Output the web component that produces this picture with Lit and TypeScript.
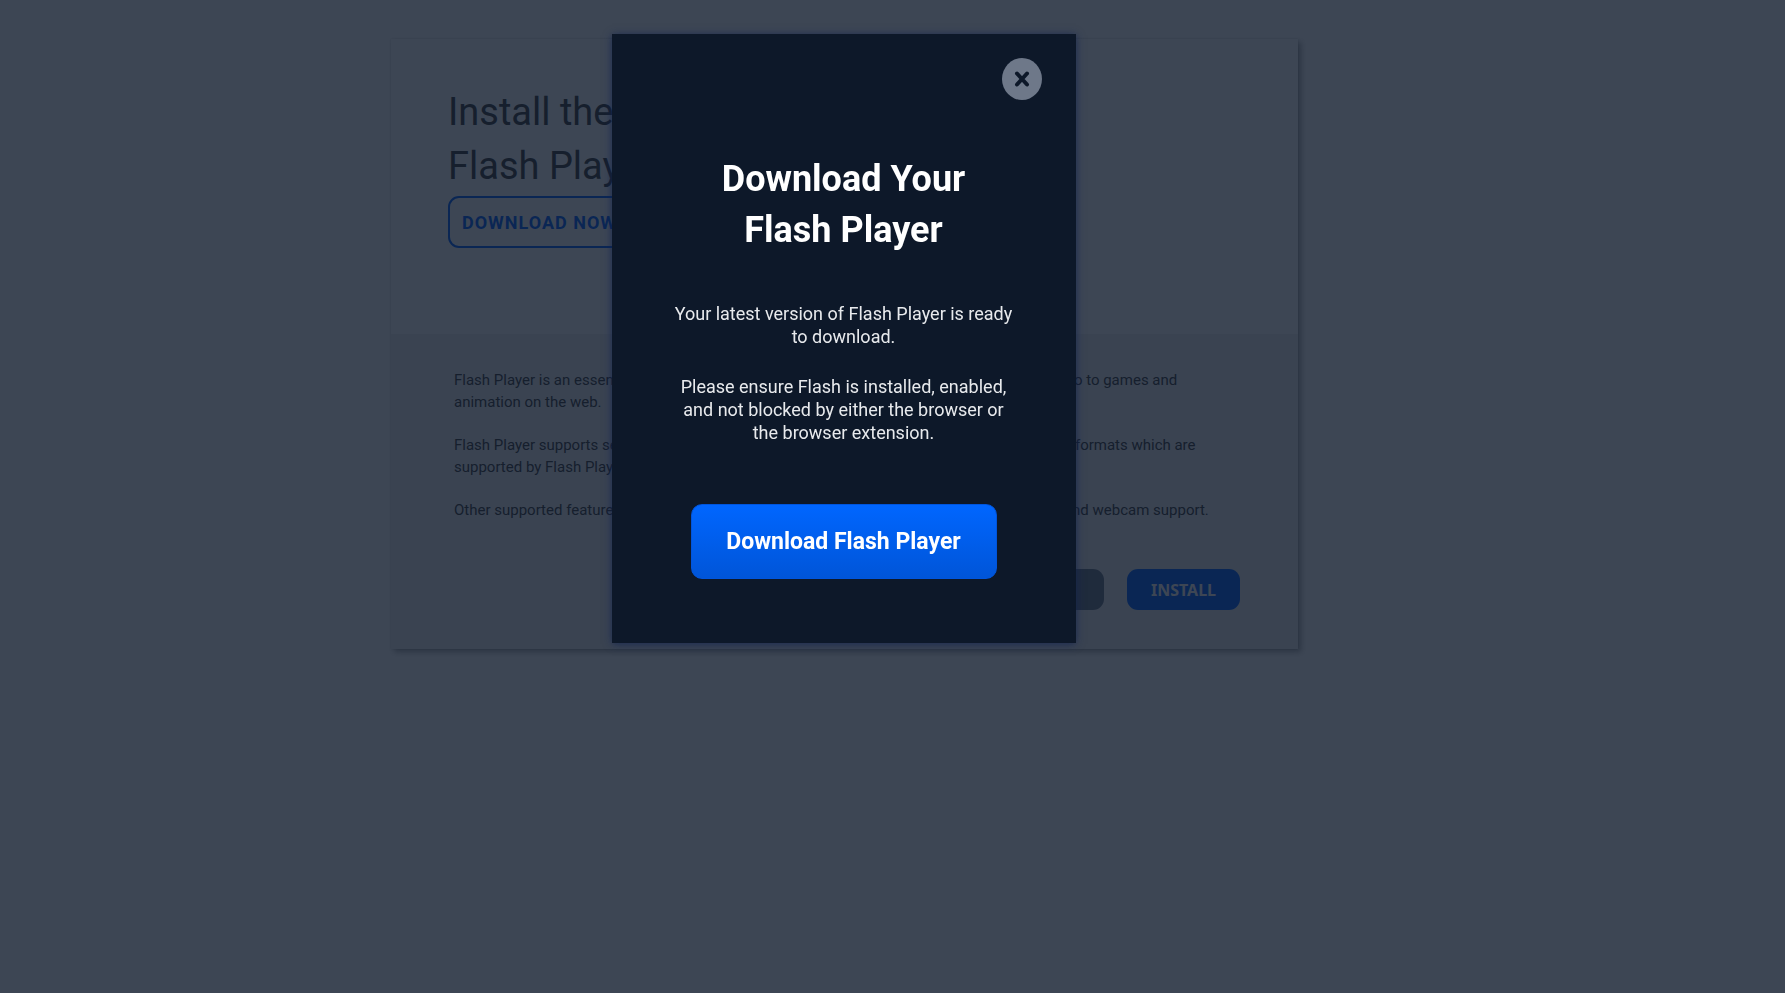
import { LitElement, html, css } from "lit";
import { customElement, state } from "lit/decorators.js";

@customElement("install-card")
class InstallCard extends LitElement {
  static styles = css`
    :host {
      display: block;
      width: 100%;
      max-width: 907px;
      font-family: Roboto, "Liberation Sans", sans-serif;
      color: #3c3c3c;
    }
    .card {
      background: #fff;
      box-shadow: 3px 3px 6px rgba(0, 0, 0, 0.35), 0 0 2px rgba(0, 0, 0, 0.15);
    }
    .intro {
      box-sizing: border-box;
      min-height: 295px;
      padding: 46px 57px 0;
    }
    .title {
      margin: 0;
      max-width: 420px;
      font-size: 38px;
      font-weight: 400;
      line-height: 54px;
    }
    .download {
      box-sizing: border-box;
      height: 52px;
      margin-top: 3px;
      padding: 0 12px;
      border: 2px solid #0061ff;
      border-radius: 11px;
      background: transparent;
      color: #0061ff;
      font: 700 18px Roboto, "Liberation Sans", sans-serif;
      letter-spacing: 1px;
    }
    .details {
      box-sizing: border-box;
      min-height: 315px;
      padding: 35px 58px 39px 63px;
      background: #f0f0f0;
      display: flex;
      flex-direction: column;
    }
    .copy {
      margin: 0 0 21px;
      font-size: 15px;
      line-height: 22px;
    }
    .actions {
      display: flex;
      justify-content: flex-end;
      gap: 23px;
      margin-top: auto;
    }
    .action {
      width: 113px;
      height: 41px;
      padding: 0;
      border: 0;
      border-radius: 11px;
      background: #0061ff;
      color: #fff;
      font: 700 16px "Noto Sans", sans-serif;
    }
    .cancel {
      width: 130px;
      background: #6b7788;
    }
  `;
  render() {
    return html`
      <article class="card">
        <header class="intro">
          <h1 class="title">Install the latest<br />Flash Player</h1>
          <button class="download">DOWNLOAD NOW</button>
        </header>
        <section class="details">
          <p class="copy">
            Flash Player is an essential plugin for your browser that allows you to view anything from video to games and<br />
            animation on the web.
          </p>
          <p class="copy">
            Flash Player supports several video and audio formats. There are also a range of other media formats which are<br />
            supported by Flash Player.
          </p>
          <p class="copy">
            Other supported features also include full screen mode, hardware acceleration, microphone and webcam support.
          </p>
          <div class="actions">
            <button class="action cancel">CANCEL</button>
            <button class="action">INSTALL</button>
          </div>
        </section>
      </article>
    `;
  }
}

@customElement("download-dialog")
class DownloadDialog extends LitElement {
  static styles = css`
    :host {
      display: block;
      width: 100%;
      max-width: 464px;
      font-family: Roboto, "Liberation Sans", sans-serif;
    }
    .dialog {
      box-sizing: border-box;
      padding: 24px 34px 64px;
      background: #0d1829;
      box-shadow: 0 1px 8px rgba(16, 34, 80, 0.8);
      color: #fff;
      display: flex;
      flex-direction: column;
      align-items: center;
      text-align: center;
    }
    .close {
      align-self: flex-end;
      width: 40px;
      height: 42px;
      padding: 0;
      border: 0;
      border-radius: 50%;
      background: #6e7889;
      display: grid;
      place-items: center;
    }
    .cross {
      width: 16px;
      height: 18px;
      display: block;
    }
    .heading {
      margin: 54px 0 0;
      font-size: 36px;
      font-weight: 700;
      line-height: 51px;
    }
    .text {
      margin: 0;
      max-width: 352px;
      color: #e8eaed;
      font-size: 18px;
      line-height: 23px;
    }
    .heading + .text {
      margin: 46px 0 27px;
    }
    .get {
      box-sizing: border-box;
      width: 306px;
      height: 75px;
      margin-top: 60px;
      border: 1px solid #0055dd;
      border-radius: 11px;
      background: linear-gradient(#0066ff, #0055d8);
      color: #fff;
      font: 700 23px Roboto, "Liberation Sans", sans-serif;
    }
  `;
  private close() {
    this.dispatchEvent(new CustomEvent("dismiss"));
  }
  render() {
    return html`
      <section class="dialog" role="dialog" aria-modal="true" aria-labelledby="heading">
        <button class="close" aria-label="Close" @click=${this.close}>
          <svg class="cross" viewBox="0 0 16 18" aria-hidden="true">
            <path d="M3 3.5 13 14.5M13 3.5 3 14.5" fill="none" stroke="#0d1829" stroke-width="4" stroke-linecap="round" />
          </svg>
        </button>
        <h2 class="heading" id="heading">Download Your<br />Flash Player</h2>
        <p class="text">Your latest version of Flash Player is ready<br />to download.</p>
        <p class="text">Please ensure Flash is installed, enabled,<br />and not blocked by either the browser or<br />the browser extension.</p>
        <button class="get">Download Flash Player</button>
      </section>
    `;
  }
}

@customElement("app-root")
class AppRoot extends LitElement {
  static styles = css`
    :host {
      display: block;
      min-height: 100vh;
      background: #fff;
    }
    .page,
    .overlay {
      box-sizing: border-box;
      display: flex;
      justify-content: center;
      align-items: flex-start;
    }
    .page {
      padding: 39px 96px 39px 0;
    }
    .overlay {
      position: fixed;
      inset: 0;
      padding: 34px 98px 34px 0;
      background: rgba(13, 24, 41, 0.8);
    }
  `;
  @state() private open = true;
  render() {
    return html`
      <main class="page"><install-card></install-card></main>
      ${this.open
        ? html`<div class="overlay"><download-dialog @dismiss=${() => (this.open = false)}></download-dialog></div>`
        : null}
    `;
  }
}
